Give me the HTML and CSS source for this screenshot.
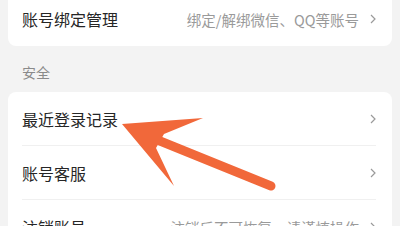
FILE: index.html
```html
<!DOCTYPE html>
<html lang="zh">
<head>
<meta charset="utf-8">
<link rel="stylesheet" href="styles.css">
</head>
<body>
<div class="page">
  <div class="card first">
    <div class="row">
      <span class="label">账号绑定管理</span>
      <span class="sub">绑定/解绑微信、QQ等账号</span>
      <svg class="chev" viewBox="0 0 6 10" width="6" height="10"><polyline points="1,1 5,5 1,9" fill="none" stroke="#9a9a9a" stroke-width="1.2"/></svg>
    </div>
  </div>
  <div class="section">安全</div>
  <div class="card">
    <div class="row line">
      <span class="label">最近登录记录</span>
      <span class="sub"></span>
      <svg class="chev" viewBox="0 0 6 10" width="6" height="10"><polyline points="1,1 5,5 1,9" fill="none" stroke="#9a9a9a" stroke-width="1.2"/></svg>
    </div>
    <div class="row line">
      <span class="label">账号客服</span>
      <span class="sub"></span>
      <svg class="chev" viewBox="0 0 6 10" width="6" height="10"><polyline points="1,1 5,5 1,9" fill="none" stroke="#9a9a9a" stroke-width="1.2"/></svg>
    </div>
    <div class="row">
      <span class="label">注销账号</span>
      <span class="sub">注销后不可恢复，请谨慎操作</span>
      <svg class="chev" viewBox="0 0 6 10" width="6" height="10"><polyline points="1,1 5,5 1,9" fill="none" stroke="#9a9a9a" stroke-width="1.2"/></svg>
    </div>
  </div>
</div>
<svg class="arrow" width="400" height="226" viewBox="0 0 400 226">
  <line x1="160" y1="141" x2="271" y2="186" stroke="#f1683a" stroke-width="9" stroke-linecap="round"/>
  <polygon points="122,124 203,118 164,134 156,148 174,186" fill="#f1683a"/>
</svg>
</body>
</html>
```
FILE: styles.css
```css
html, body {
  margin: 0;
  padding: 0;
  background: #f3f3f3;
  overflow: hidden;
}
body {
  font-family: "Noto Sans CJK SC", "Noto Sans", sans-serif;
  width: 400px;
  height: 226px;
  position: relative;
}
.page {
  padding: 0 8px;
}
.card {
  background: #ffffff;
  border-radius: 8px;
}
.card.first {
  margin-top: -8px;
}
.row {
  display: flex;
  align-items: center;
  height: 54px;
  padding: 0 16px 0 14px;
  position: relative;
  box-sizing: border-box;
}
.row.line::after {
  content: "";
  position: absolute;
  left: 14px;
  right: 16px;
  bottom: 0;
  height: 1px;
  background: #f0f0f0;
}
.label {
  font-size: 16px;
  color: #262626;
  flex: 1;
  white-space: nowrap;
}
.sub {
  font-size: 14.5px;
  color: #9a9a9a;
  white-space: nowrap;
  margin-right: 11px;
}
.chev {
  display: block;
}
.section {
  height: 46px;
  box-sizing: border-box;
  padding: 16px 14px 0;
  font-size: 14px;
  line-height: 20px;
  color: #8a8a8a;
}
.arrow {
  position: absolute;
  left: 0;
  top: 0;
}
```
